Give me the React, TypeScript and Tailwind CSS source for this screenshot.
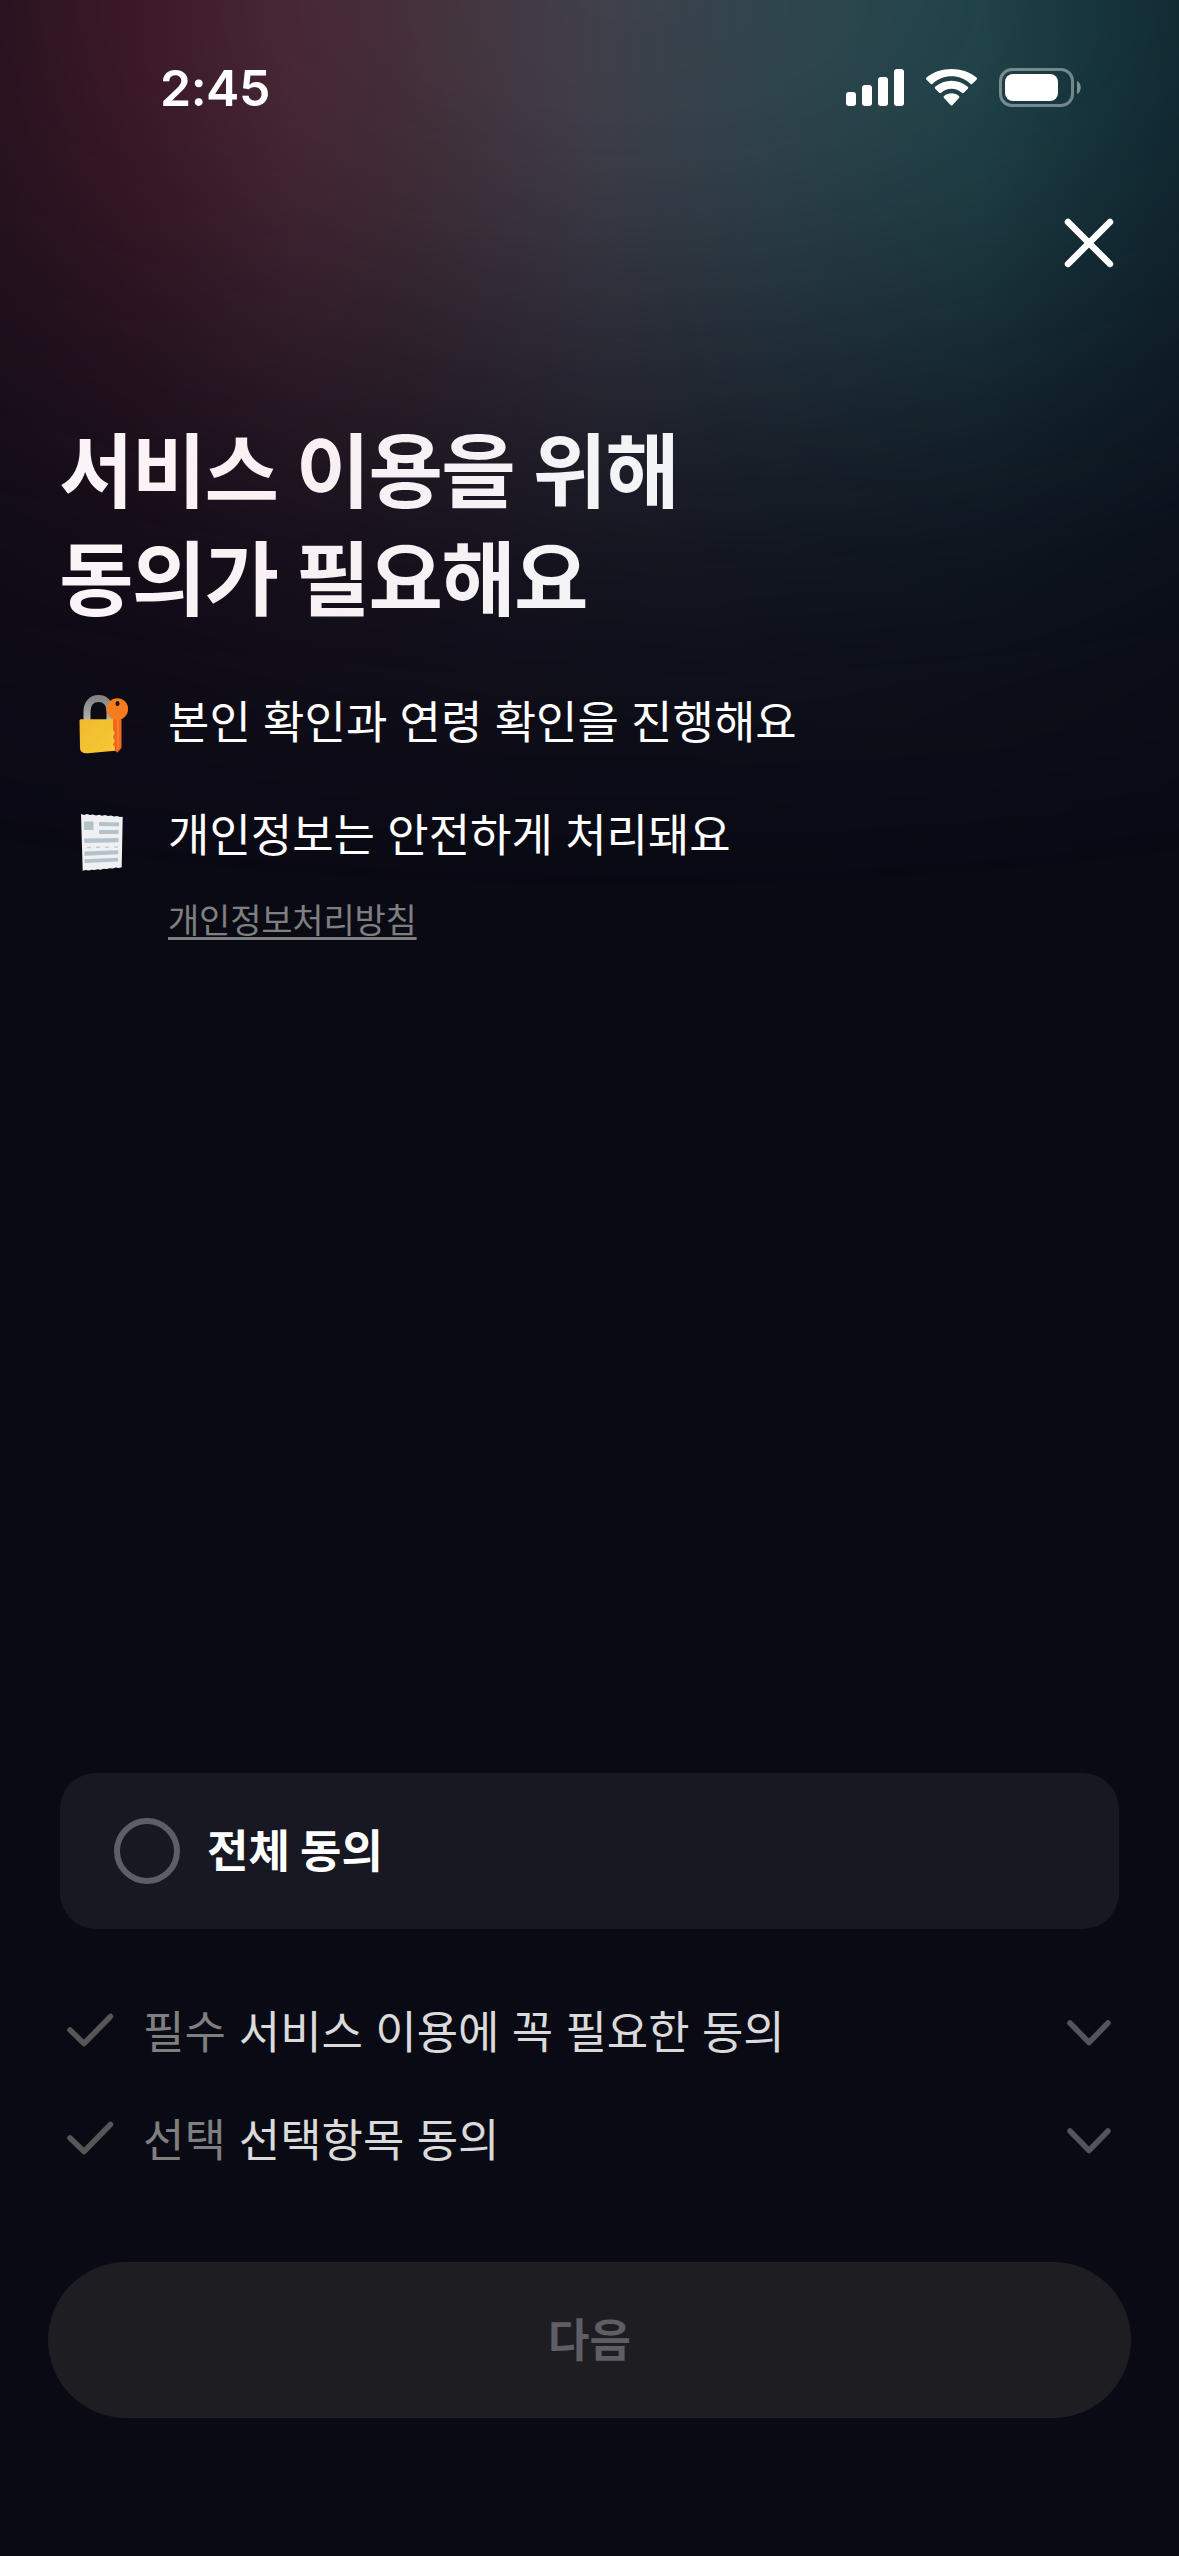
import { useState } from 'react';

type Agreement = {
  id: string;
  kind: string;
  label: string;
};

const AGREEMENTS: Agreement[] = [
  { id: 'required', kind: '필수', label: '서비스 이용에 꼭 필요한 동의' },
  { id: 'optional', kind: '선택', label: '선택항목 동의' },
];

function StatusBar() {
  return (
    <div className="flex h-[177px] items-start justify-between pl-[160px] pr-[98px] pt-[58px] text-white">
      <span className="font-['Inter',sans-serif] text-[50px] font-semibold leading-[60px] tracking-[-0.5px]">2:45</span>
      <svg className="mt-[8px] h-[44px] w-[235px]" viewBox="0 0 235 44" fill="currentColor">
        <rect x="0" y="26" width="10" height="14" rx="3" />
        <rect x="16" y="19" width="10" height="21" rx="3" />
        <rect x="32" y="11" width="10" height="29" rx="3" />
        <rect x="48" y="3" width="10" height="37" rx="3" />
        <path d="M105.500 10.300c7.100 0 13.700 2.600 18.900 7.500a1.400 1.400 0 0 0 2 0l4.100-4.100a1.500 1.500 0 0 0 0-2.200c-14-11.300-36-11.300-50 0a1.500 1.500 0 0 0 0 2.200l4.100 4.100a1.400 1.400 0 0 0 2 0c5.200-4.900 11.800-7.500 18.900-7.500z" />
        <path d="M105.500 22.800c3.900 0 7.500 1.400 10.300 4a1.500 1.500 0 0 0 2 0l4-4a1.500 1.500 0 0 0 0-2.100c-9.300-8-23.300-8-32.600 0a1.500 1.500 0 0 0 0 2.100l4 4a1.500 1.500 0 0 0 2 0c2.800-2.600 6.400-4 10.300-4z" />
        <path d="M113 31.900c.6-.6.600-1.500-.1-2-4.300-3.700-10.500-3.700-14.800 0-.7.500-.7 1.400-.1 2l6.500 7a1.400 1.400 0 0 0 2 0z" />
        <rect x="154.500" y="3.500" width="72" height="36" rx="11.500" fill="none" stroke="currentColor" strokeOpacity=".4" strokeWidth="3" />
        <rect x="159" y="8" width="53" height="27" rx="8" />
        <path d="M231 15c5 2 5 11 0 13z" fillOpacity=".45" />
      </svg>
    </div>
  );
}

function LockIcon() {
  return (
    <svg className="h-[60px] w-[54px] shrink-0" viewBox="0 0 54 60">
      <defs>
        <linearGradient id="shackle" x1="0" y1="0" x2="0" y2="1">
          <stop offset="0" stopColor="#858585" />
          <stop offset="1" stopColor="#b5b5b5" />
        </linearGradient>
        <linearGradient id="body" x1="0" y1="0" x2="1" y2="1">
          <stop offset="0" stopColor="#eebb2f" />
          <stop offset="1" stopColor="#f8c832" />
        </linearGradient>
      </defs>
      <path d="M8 27V17.500C8 9 13 4.500 19.500 4.500S31 9 31 17.500V27" fill="none" stroke="url(#shackle)" strokeWidth="7" />
      <path d="M0.500 27c0-1.200.6-1.700 1.800-1.700H36V56.800L9 59.200C4 59.500 1 58 1 54z" fill="url(#body)" />
      <path d="M34 25H42.500V54l-4 4.500L35.500 56.500l1-3-2.500-2.500 1.800-4-1.800-4 1.800-4-1.800-4z" fill="#f1661c" />
      <circle cx="38.300" cy="15" r="10.800" fill="#f67c20" />
      <path d="M39 25V55" stroke="#f98732" strokeWidth="1.500" />
      <ellipse cx="38.500" cy="9.500" rx="2" ry="2.600" fill="#1a0d12" />
    </svg>
  );
}

function ReceiptIcon() {
  return (
    <svg className="h-[60px] w-[54px] shrink-0" viewBox="0 0 54 60">
      <path d="M2 1l3 1 3-1 3 1 3-.6 3 1 3-.7 3 1 3-.6 3 1 3-.6 3 1 3-.6 3 1 2.700-.2-1 50.500-3 .8-3-.4-3 1-3-.4-3 .9-3-.4-3 1-3-.5-3 .9-3-.4-3 .8-3-.6-3 .8z" fill="#eff0f1" />
      <g fill="#b4c2cb">
        <rect x="5" y="8.500" width="9.500" height="8.500" />
        <path d="M20 9l20 .6v3.600L20 13zM20 17h19.500v4H20zM5.300 25.500L39.500 25v4.300L5.300 30zM5.500 38.500L39.200 37.300v4L5.500 42.700zM5.500 46.200L39 44.800v3.800L5.500 50z" />
      </g>
      <path d="M8 34.500L39.500 34" stroke="#c3cdd3" strokeWidth="1.500" strokeDasharray="4 5" />
    </svg>
  );
}

export default function App() {
  const [checked, setChecked] = useState(false);

  return (
    <main className="relative flex h-[2556px] w-[1179px] flex-col overflow-hidden bg-[#0a0a15] font-['Noto_Sans_CJK_KR',sans-serif] text-white">
      {/* aurora glow behind the header */}
      <div className="pointer-events-none absolute inset-x-0 top-0 h-[900px] bg-[linear-gradient(90deg,#381825_0%,#471c2b_11%,#4e2b39_25%,#47313b_34%,#41404b_50%,#31474f_66%,#23494f_83%,#183c43_94%,#15353d_100%)] [mask-image:radial-gradient(ellipse_2000px_890px_at_53%_0,#000_0%,rgba(0,0,0,.97)_12%,rgba(0,0,0,.82)_25%,rgba(0,0,0,.62)_37%,rgba(0,0,0,.36)_52%,rgba(0,0,0,.18)_65%,rgba(0,0,0,.07)_80%,transparent_100%)]" />

      <div className="relative flex flex-1 flex-col">
        <StatusBar />

        <header className="flex h-[132px] items-center justify-end pr-[62px]">
          <button aria-label="닫기">
            <svg className="h-[56px] w-[56px]" viewBox="0 0 56 56" fill="none" stroke="currentColor" strokeWidth="6.500" strokeLinecap="round">
              <path d="M7 7L49 49M49 7L7 49" />
            </svg>
          </button>
        </header>

        <section className="px-[60px] pt-[103px]">
          <h1 className="-ml-[1px] w-fit bg-[linear-gradient(90deg,#fcf5f7_0%,#f8f0f3_40%,#f2f5f7_100%)] bg-clip-text text-[81px] font-bold leading-[108px] tracking-[-1.800px] text-transparent [word-spacing:2px]">
            서비스 이용을 위해
            <br />
            동의가 필요해요
          </h1>

          <ul className="mt-[54px] flex flex-col gap-[37px] pl-[19px] text-[45px] leading-[76px] [word-spacing:2.2px]">
            <li className="flex items-start gap-[35px]">
              <div className="pt-[12px]">
                <LockIcon />
              </div>
              <span>본인 확인과 연령 확인을 진행해요</span>
            </li>
            <li className="flex items-start gap-[35px]">
              <div className="pt-[18px]">
                <ReceiptIcon />
              </div>
              <div className="flex flex-col items-start">
                <span>개인정보는 안전하게 처리돼요</span>
                <a className="mt-[21px] text-[34px] leading-[54px] tracking-[-0.200px] text-[#7f7f7f] underline decoration-[3px] underline-offset-[4px]">개인정보처리방침</a>
              </div>
            </li>
          </ul>
        </section>

        <section className="mt-auto px-[60px]">
          <button
            className="flex h-[156px] w-full items-center gap-[27px] rounded-[36px] bg-[#181822] pl-[54px]"
            onClick={() => setChecked(!checked)}
          >
            <span className={checked ? 'size-[66px] rounded-full bg-white' : 'size-[66px] rounded-full border-[6px] border-[#5e5e66]'} />
            <span className="pb-[5px] text-[45px] font-bold leading-[76px]">전체 동의</span>
          </button>

          <ul className="mt-[46px]">
            {AGREEMENTS.map((item) => (
              <li key={item.id} className="flex h-[108px] items-center text-[45px] leading-[76px] [word-spacing:2.2px]">
                <svg className="h-[40px] w-[60px]" viewBox="0 0 60 40" fill="none" stroke="#565656" strokeWidth="5.500" strokeLinecap="round" strokeLinejoin="round">
                  <path d="M10 21L24 34.500L50.500 7.500" />
                </svg>
                <span className="ml-[23px] pt-[2px] text-[#7f7f7f]">{item.kind}</span>
                <span className="ml-[13px] pt-[2px] text-[#dadada]">{item.label}</span>
                <svg className="ml-auto h-[40px] w-[60px]" viewBox="0 0 60 40" fill="none" stroke="#54545c" strokeWidth="5.500" strokeLinecap="round" strokeLinejoin="round">
                  <path d="M11 14L30 33.500L49 14" />
                </svg>
              </li>
            ))}
          </ul>
        </section>

        <footer className="px-[48px] pb-[138px] pt-[71px]">
          <button className="h-[156px] w-full rounded-full bg-[#1e1d22] pb-[4px] text-[45px] font-bold leading-[76px] text-[#5f5e64]" disabled={!checked}>
            다음
          </button>
        </footer>
      </div>
    </main>
  );
}
